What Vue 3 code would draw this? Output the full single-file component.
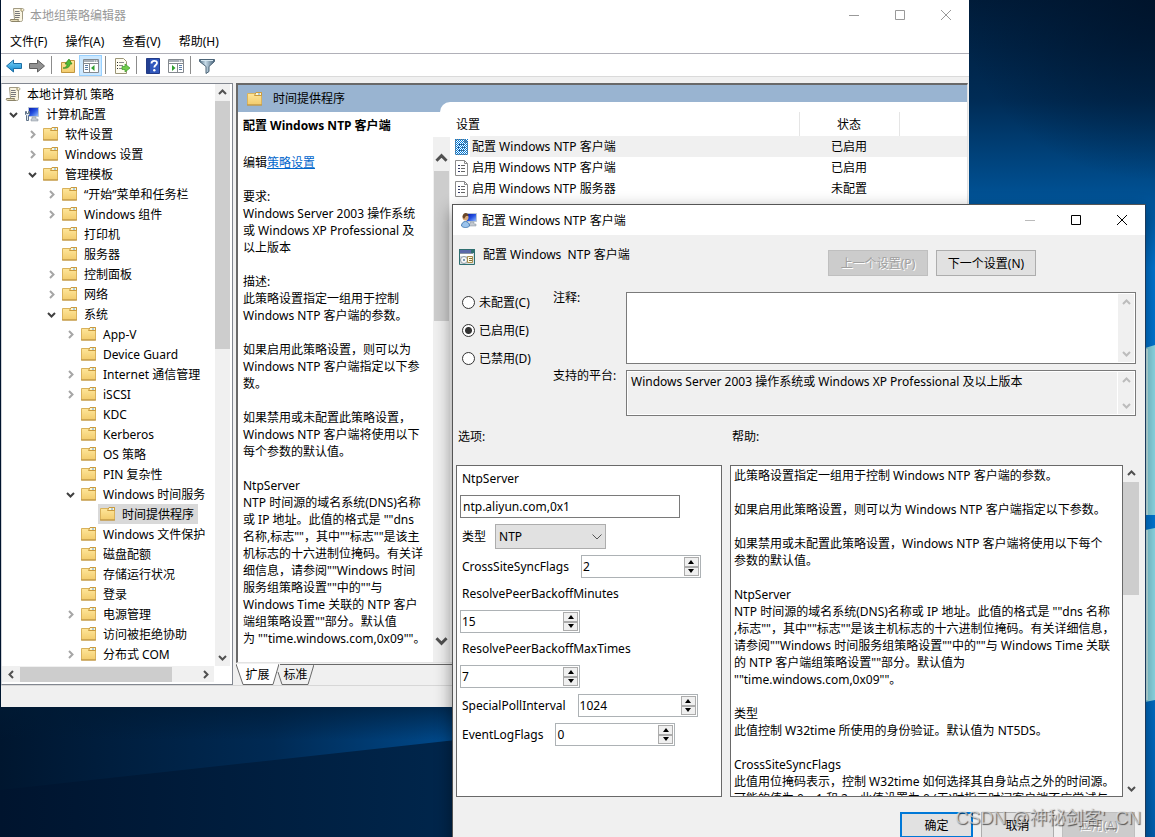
<script setup>
import { ref, reactive } from "vue";

const menus = ["文件(F)", "操作(A)", "查看(V)", "帮助(H)"];

// level - вложенность, open: true / false - есть стрелка, undefined - нет
const tree = [
  { level: 0, name: "本地计算机 策略", icon: "scroll" },
  { level: 1, name: "计算机配置", icon: "computer", open: true },
  { level: 2, name: "软件设置", open: false },
  { level: 2, name: "Windows 设置", open: false },
  { level: 2, name: "管理模板", open: true },
  { level: 3, name: "“开始”菜单和任务栏", open: false },
  { level: 3, name: "Windows 组件", open: false },
  { level: 3, name: "打印机" },
  { level: 3, name: "服务器" },
  { level: 3, name: "控制面板", open: false },
  { level: 3, name: "网络", open: false },
  { level: 3, name: "系统", open: true },
  { level: 4, name: "App-V", open: false },
  { level: 4, name: "Device Guard" },
  { level: 4, name: "Internet 通信管理", open: false },
  { level: 4, name: "iSCSI", open: false },
  { level: 4, name: "KDC" },
  { level: 4, name: "Kerberos" },
  { level: 4, name: "OS 策略" },
  { level: 4, name: "PIN 复杂性" },
  { level: 4, name: "Windows 时间服务", open: true },
  { level: 5, name: "时间提供程序" },
  { level: 4, name: "Windows 文件保护" },
  { level: 4, name: "磁盘配额" },
  { level: 4, name: "存储运行状况" },
  { level: 4, name: "登录" },
  { level: 4, name: "电源管理", open: false },
  { level: 4, name: "访问被拒绝协助" },
  { level: 4, name: "分布式 COM", open: false },
];
const selectedNode = ref("时间提供程序");
const indent = (level) => (level ? 2 + 19 * (level - 1) : 1) + "px";

const policies = [
  { name: "配置 Windows NTP 客户端", state: "已启用" },
  { name: "启用 Windows NTP 客户端", state: "已启用" },
  { name: "启用 Windows NTP 服务器", state: "未配置" },
];

const description = `要求:
Windows Server 2003 操作系统
或 Windows XP Professional 及
以上版本

描述:
此策略设置指定一组用于控制
Windows NTP 客户端的参数。

如果启用此策略设置，则可以为
Windows NTP 客户端指定以下参
数。

如果禁用或未配置此策略设置，
Windows NTP 客户端将使用以下
每个参数的默认值。

NtpServer
NTP 时间源的域名系统(DNS)名称
或 IP 地址。此值的格式是 ""dns
名称,标志""，其中""标志""是该主
机标志的十六进制位掩码。有关详
细信息，请参阅""Windows 时间
服务组策略设置""中的""与
Windows Time 关联的 NTP 客户
端组策略设置""部分。默认值
为 ""time.windows.com,0x09""。`;

const help = `此策略设置指定一组用于控制 Windows NTP 客户端的参数。

如果启用此策略设置，则可以为 Windows NTP 客户端指定以下参数。

如果禁用或未配置此策略设置，Windows NTP 客户端将使用以下每个
参数的默认值。

NtpServer
NTP 时间源的域名系统(DNS)名称或 IP 地址。此值的格式是 ""dns 名称
,标志""，其中""标志""是该主机标志的十六进制位掩码。有关详细信息，
请参阅""Windows 时间服务组策略设置""中的""与 Windows Time 关联
的 NTP 客户端组策略设置""部分。默认值为
""time.windows.com,0x09""。

类型
此值控制 W32time 所使用的身份验证。默认值为 NT5DS。

CrossSiteSyncFlags
此值用位掩码表示，控制 W32time 如何选择其自身站点之外的时间源。
可能的值为 0、1 和 2。此值设置为 0 (无)时指示时间客户端不应尝试与`;

const states = [
  { value: "none", label: "未配置(C)" },
  { value: "on", label: "已启用(E)" },
  { value: "off", label: "已禁用(D)" },
];
const state = ref("on");
const comment = ref("");
const platform = "Windows Server 2003 操作系统或 Windows XP Professional 及以上版本";
const ntpServer = ref("ntp.aliyun.com,0x1");
const type = ref("NTP");
const numbers = reactive([
  { name: "CrossSiteSyncFlags", value: 2 },
  { name: "ResolvePeerBackoffMinutes", value: 15, stacked: true },
  { name: "ResolvePeerBackoffMaxTimes", value: 7, stacked: true },
  { name: "SpecialPollInterval", value: 1024 },
  { name: "EventLogFlags", value: 0 },
]);
const step = (item, delta) => {
  item.value = Math.max(0, item.value + delta);
};
</script>

<template>
  <main class="desktop">
    <svg class="defs" width="0" height="0" aria-hidden="true">
      <linearGradient id="gold" x1="0" y1="0" x2="0" y2="1">
        <stop offset="0" stop-color="#ffe89e" />
        <stop offset="1" stop-color="#f2cb6c" />
      </linearGradient>
      <linearGradient id="screen" x1="0" y1="0" x2="1" y2="1">
        <stop offset="0" stop-color="#0414a8" />
        <stop offset=".5" stop-color="#2450e0" />
        <stop offset="1" stop-color="#9cc4ff" />
      </linearGradient>
      <linearGradient id="blue" x1="0" y1="0" x2="0" y2="1">
        <stop offset="0" stop-color="#7fd4f8" />
        <stop offset="1" stop-color="#0d87cf" />
      </linearGradient>
      <linearGradient id="steel" x1="0" y1="0" x2="1" y2="0">
        <stop offset="0" stop-color="#4d6a80" />
        <stop offset=".4" stop-color="#c7dbe8" />
        <stop offset="1" stop-color="#46627a" />
      </linearGradient>
      <symbol id="folder" viewBox="0 0 16 16">
        <path d="M.5 2.500h8l1-1h5v12.500H.5z" fill="url(#gold)" stroke="#d9b25c" />
        <path d="M9 2h5v2H8z" fill="#fff6d0" />
        <path d="M7.500 4.500h7M7.500 4.500l1.500-3h5.500v3" fill="none" stroke="#c99a3f" />
        <path d="M11 3h2" stroke="#5b9ee0" />
        <path d="M0 14h15" stroke="#b98f3e" />
      </symbol>
      <symbol id="scroll" viewBox="0 0 16 16">
        <path d="M4.500 1.500h9c2 0 1.500 3 0 3v8c0 2-1 2-2 2h-7l1-2z" fill="#faf5e2" stroke="#a19a82" />
        <path d="M1.500 12.500h8c-1 1 0 2 1 2h-8c-1 0-1.500-1-1-2z" fill="#e3d9b6" stroke="#8c8468" />
        <path d="M12.500 1.500c-1 1-1 2 0 3h1.500" fill="#d8c990" stroke="#a19a82" />
        <path d="M6 4.500h4.500M6 6.500h5M6 8.500h5M6 10.500h4.500" stroke="#77777a" />
      </symbol>
      <symbol id="computer" viewBox="0 0 16 16">
        <path d="M4.500 1.500h10v9h-10z" fill="url(#screen)" stroke="#b9c5d4" />
        <path d="M8 11h4v2h2v2H7v-2h1z" fill="#c3c9d0" stroke="#84909c" stroke-width=".5" />
        <path d="M1.500 5.500v3l1 1v5h2v-5l1-1v-3h-1v2h-2v-2z" fill="#e1e8ef" stroke="#5f7288" />
      </symbol>
      <symbol id="user-computer" viewBox="0 0 16 16">
        <path d="M5.500 1.500h10v8h-10z" fill="url(#screen)" stroke="#b9c5d4" />
        <path d="M9 10h4v2h2v2H8v-2h1z" fill="#c3c9d0" stroke="#84909c" stroke-width=".5" />
        <circle cx="4.500" cy="5.500" r="3" fill="#d9a878" />
        <path d="M1.500 5c0-5 6-5 6-1L5 4 3 7z" fill="#6b4728" />
        <path d="M.5 14c0-6 8-6 8 0-2 2-6 2-8 0z" fill="#9cc4ec" stroke="#4c7fb5" />
      </symbol>
      <symbol id="setting" viewBox="0 0 16 16">
        <path d="M.5.500h15v15H.5z" fill="#d5dde0" stroke="#2f6f70" />
        <path d="M1 1h11v3H1z" fill="#5a68a8" />
        <path d="M0 0h16v1H0zM12 1h4v3h-4z" fill="#2f6f70" />
        <path d="M1 5h13v2H1z" fill="#fff" />
        <path d="M1 4.500h13" stroke="#8c96a4" />
        <circle cx="5" cy="11" r="3.500" fill="#f6f6f6" stroke="#8f9ba4" />
        <circle cx="5" cy="11" r="1" fill="#517b9a" />
        <path d="M8.500 7.500h5v6h-5z" fill="#fffbe0" stroke="#a78d4b" />
        <path d="M10 9.500h3M10 11.500h3" stroke="#7e6b39" />
      </symbol>
      <symbol id="sheet" viewBox="0 0 14 16">
        <path d="M.5.500h9l3 3v12H.5z" fill="#fff" stroke="#8b8b8b" />
        <path d="M9.500.500v3h3" fill="none" stroke="#8b8b8b" />
        <path d="M3 5.500h2M3 8.500h2M3 11.500h2" stroke="#333a66" />
        <path d="M6 5.500h4M6 8.500h4M6 11.500h4" stroke="#666" />
      </symbol>
      <pattern id="dither" width="2" height="2" patternUnits="userSpaceOnUse">
        <path d="M0 0h1v1H0zM1 1h1v1H1z" fill="#0078d7" />
      </pattern>
      <symbol id="chevron" viewBox="0 0 9 9">
        <path d="M1 6l3.500-3.500L8 6" fill="none" stroke="currentColor" stroke-width="2" />
      </symbol>
      <symbol id="min" viewBox="0 0 10 10">
        <path d="M0 5.500h10" stroke="currentColor" />
      </symbol>
      <symbol id="max" viewBox="0 0 10 10">
        <path d="M.5.500h9v9h-9z" fill="none" stroke="currentColor" />
      </symbol>
      <symbol id="close" viewBox="0 0 10 10">
        <path d="M0 0l10 10M10 0L0 10" stroke="currentColor" />
      </symbol>
      <symbol id="pane" viewBox="0 0 16 16">
        <path d="M.5 1.500h15v13H.5z" fill="#fff" stroke="#84898f" />
        <path d="M1 2h14v2H1z" fill="#a9b0b8" />
        <path d="M11 3h1M13 3h1" stroke="#fff" />
        <path d="M1 5.500h14" stroke="#84898f" />
      </symbol>
    </svg>

    <svg class="wallpaper" viewBox="0 0 1155 837" preserveAspectRatio="none" aria-hidden="true">
      <defs>
        <linearGradient id="sky" x1="0" y1="0" x2="0" y2="1">
          <stop offset="0" stop-color="#001c3a" />
          <stop offset=".12" stop-color="#002c56" />
          <stop offset=".23" stop-color="#005092" />
          <stop offset=".32" stop-color="#0076d4" />
          <stop offset=".7" stop-color="#0078d7" />
          <stop offset="1" stop-color="#0062b4" />
        </linearGradient>
        <linearGradient id="ray" x1="0" y1="0" x2="1" y2="0">
          <stop offset="0" stop-color="#00162f" />
          <stop offset=".6" stop-color="#002a54" />
          <stop offset="1" stop-color="#004a8c" />
        </linearGradient>
        <linearGradient id="shade" x1="0" y1="0" x2="0" y2="1">
          <stop offset="0" stop-color="#001a34" stop-opacity=".8" />
          <stop offset="1" stop-color="#001a34" stop-opacity="0" />
        </linearGradient>
        <linearGradient id="ground" x1="0" y1="0" x2="1" y2="0">
          <stop offset="0" stop-color="#00142e" />
          <stop offset="1" stop-color="#00264c" />
        </linearGradient>
        <radialGradient id="corner" cx="1" cy="0" r="1">
          <stop offset="0" stop-color="#001228" stop-opacity=".8" />
          <stop offset="1" stop-color="#001228" stop-opacity="0" />
        </radialGradient>
      </defs>
      <path d="M0 0h1155v837H0z" fill="url(#sky)" />
      <path d="M960 0h195v180H960z" fill="url(#corner)" />
      <path d="M0 0h456v837H0z" fill="url(#ground)" />
      <path d="M0 680h456v60L0 790z" fill="url(#ray)" />
      <path d="M0 700h456v40H0z" fill="url(#shade)" />
      <path d="M1145 348l10-3v170h-10zM1145 530l10-2v172l-10 2z" fill="#8edbe8" />
      <path d="M1147 349v166M1147 530v170" stroke="#c9f2f4" stroke-width="2" />
    </svg>

    <section class="window editor">
      <header class="titlebar titlebar--inactive">
        <svg class="icon"><use href="#scroll" /></svg>
        <h1>本地组策略编辑器</h1>
        <button class="sys" aria-label="最小化"><svg><use href="#min" /></svg></button>
        <button class="sys" aria-label="最大化"><svg><use href="#max" /></svg></button>
        <button class="sys" aria-label="关闭"><svg><use href="#close" /></svg></button>
      </header>
      <nav class="menu">
        <button v-for="menu in menus" :key="menu">{{ menu }}</button>
      </nav>
      <div class="toolbar">
        <button aria-label="后退">
          <svg class="icon" viewBox="0 0 16 16">
            <path d="M.5 8l7-6v3.500h8v5h-8V14z" fill="url(#blue)" stroke="#1c6ea4" />
          </svg>
        </button>
        <button aria-label="前进">
          <svg class="icon" viewBox="0 0 16 16">
            <path d="M15.500 8l-7-6v3.500h-8v5h8V14z" fill="#929292" stroke="#5f5f5f" />
          </svg>
        </button>
        <i class="sep"></i>
        <button aria-label="上一级">
          <svg class="icon" viewBox="0 0 16 16">
            <path d="M1.500 4.500h7l1-2h5v12h-13z" fill="url(#gold)" stroke="#c0953f" />
            <path d="M3 10c3 0 4-2 4-4H5l4-5 3 5h-2c0 3-3 5-7 4z" fill="#4fbb35" stroke="#2c8420" stroke-width=".7" />
          </svg>
        </button>
        <button class="pressed" aria-label="显示/隐藏控制台树">
          <svg class="icon" viewBox="0 0 16 16">
            <use href="#pane" />
            <path d="M6.500 6v8" stroke="#84898f" />
            <path d="M2 7.500h3M2 9.500h3M2 11.500h3" stroke="#5a7da8" />
            <path d="M11.500 7v6L8 10z" fill="#2fa02f" />
          </svg>
        </button>
        <i class="sep"></i>
        <button aria-label="导出列表">
          <svg class="icon" viewBox="0 0 16 16">
            <path d="M1.500.500h8l3 3v12h-11z" fill="#fffdf0" stroke="#9b9577" />
            <path d="M3 4.500h1M3 7.500h1M3 10.500h1" stroke="#222" />
            <path d="M5 4.500h5M5 7.500h4M5 10.500h3" stroke="#8b8b8b" />
            <path d="M8 8.500h3V6l5 4-5 4v-2.500H8z" fill="#72cc4b" stroke="#3b9b2a" stroke-width=".7" />
          </svg>
        </button>
        <i class="sep"></i>
        <button aria-label="帮助">
          <svg class="icon" viewBox="0 0 16 16">
            <path d="M1.500.500h13v15h-13z" fill="#3158bd" stroke="#233b86" />
            <path d="M2 1h3v14H2z" fill="#223f92" />
            <path d="M6.500 5.500c0-3.500 5.500-3.500 5.500-.500 0 2-2.700 2-2.700 4.500" fill="none" stroke="#fff" stroke-width="1.800" />
            <circle cx="9.300" cy="12.300" r="1.200" fill="#fff" />
          </svg>
        </button>
        <button aria-label="显示/隐藏操作窗格">
          <svg class="icon" viewBox="0 0 16 16">
            <use href="#pane" />
            <path d="M9.500 6v8" stroke="#84898f" />
            <path d="M11 7.500h3M11 9.500h3M11 11.500h3" stroke="#5a7da8" />
            <path d="M4 7v6l3.500-3z" fill="#2fa02f" />
          </svg>
        </button>
        <i class="sep"></i>
        <button aria-label="筛选器">
          <svg class="icon" viewBox="0 0 16 16">
            <path d="M.5 1.500h15v2l-5.500 5v5l-3 2v-7l-6.500-5z" fill="url(#steel)" stroke="#4c6477" />
            <path d="M2 2.500h12" stroke="#d9e9f2" />
          </svg>
        </button>
      </div>

      <div class="workspace">
        <aside class="tree">
          <div class="tree__view">
            <ul>
              <li v-for="node in tree" :key="node.name" :style="{ paddingLeft: indent(node.level) }">
                <span v-if="node.level" class="arrow" :class="{ 'arrow--open': node.open }">
                  <svg v-if="node.open !== undefined"><use href="#chevron" /></svg>
                </span>
                <button class="node" :class="{ 'node--selected': node.name === selectedNode }"
                  @click="selectedNode = node.name">
                  <svg class="icon"><use :href="'#' + (node.icon || 'folder')" /></svg>
                  {{ node.name }}
                </button>
              </li>
            </ul>
            <div class="scroll">
              <svg class="up"><use href="#chevron" /></svg>
              <i class="thumb thumb--tree"></i>
              <svg class="down"><use href="#chevron" /></svg>
            </div>
          </div>
          <div class="scroll scroll--x">
            <svg class="left"><use href="#chevron" /></svg>
            <i class="thumb"></i>
            <svg class="right"><use href="#chevron" /></svg>
          </div>
        </aside>

        <div class="result">
          <div class="result__frame">
            <header class="result__head">
              <svg class="icon"><use href="#folder" /></svg>
              <h2>时间提供程序</h2>
              <i class="curve"></i>
            </header>
            <div class="result__body">
              <article class="extended">
                <h3>配置 Windows NTP 客户端</h3>
                <div class="extended__view">
                  <div class="extended__text">
                    <p>编辑<a href="#">策略设置</a></p>
                    <p class="lines">{{ description }}</p>
                  </div>
                  <div class="scroll scroll--wide">
                    <svg class="up"><use href="#chevron" /></svg>
                    <i class="thumb thumb--text"></i>
                    <svg class="down"><use href="#chevron" /></svg>
                  </div>
                </div>
              </article>
              <table class="policies">
                <thead>
                  <tr>
                    <th class="col-name">设置</th>
                    <th class="col-state">状态</th>
                    <th></th>
                  </tr>
                </thead>
                <tbody>
                  <tr v-for="(policy, i) in policies" :key="policy.name" :class="{ current: i === 0 }">
                    <td>
                      <div class="policy">
                        <svg viewBox="0 0 14 16">
                          <use href="#sheet" />
                          <path v-if="i === 0" d="M0 0h13v16H0z" fill="url(#dither)" />
                        </svg>
                        <span>{{ policy.name }}</span>
                      </div>
                    </td>
                    <td class="state">{{ policy.state }}</td>
                    <td></td>
                  </tr>
                </tbody>
              </table>
            </div>
          </div>
          <div class="tabs">
            <button class="tab tab--active">
              <svg viewBox="0 0 43 21"><path d="M0 0l7 20.500h30L43 0" fill="#fff" stroke="#696969" /></svg>
              <span>扩展</span>
            </button>
            <button class="tab">
              <svg viewBox="0 0 37 21"><path d="M1 8l4 12.500h26L37 .500H3" fill="#f0f0f0" stroke="#696969" /></svg>
              <span>标准</span>
            </button>
            <i class="tabs__rest"></i>
          </div>
        </div>
      </div>
      <footer class="status"></footer>
    </section>

    <section class="window dialog">
      <header class="titlebar">
        <svg class="icon"><use href="#user-computer" /></svg>
        <h1>配置 Windows NTP 客户端</h1>
        <button class="sys" disabled aria-label="最小化"><svg><use href="#min" /></svg></button>
        <button class="sys" aria-label="最大化"><svg><use href="#max" /></svg></button>
        <button class="sys" aria-label="关闭"><svg><use href="#close" /></svg></button>
      </header>
      <div class="caption">
        <svg class="icon"><use href="#setting" /></svg>
        <h2>配置 Windows &nbsp;NTP 客户端</h2>
        <div class="caption__buttons">
          <button class="btn" disabled>上一个设置(P)</button>
          <button class="btn">下一个设置(N)</button>
        </div>
      </div>

      <div class="general">
        <div class="radios">
          <label v-for="item in states" :key="item.value">
            <input type="radio" name="state" :value="item.value" v-model="state">
            {{ item.label }}
          </label>
        </div>
        <div class="fields">
          <label for="comment">注释:</label>
          <div class="memo">
            <textarea id="comment" v-model="comment"></textarea>
            <div class="scroll scroll--off">
              <svg class="up"><use href="#chevron" /></svg>
              <svg class="down"><use href="#chevron" /></svg>
            </div>
          </div>
          <label for="platform">支持的平台:</label>
          <div class="memo memo--readonly">
            <textarea id="platform" readonly :value="platform"></textarea>
            <div class="scroll scroll--off">
              <svg class="up"><use href="#chevron" /></svg>
              <svg class="down"><use href="#chevron" /></svg>
            </div>
          </div>
        </div>
      </div>

      <div class="panels">
        <h3>选项:</h3>
        <h3>帮助:</h3>
        <form class="options" @submit.prevent>
          <label for="server">NtpServer</label>
          <input id="server" class="text" type="text" v-model="ntpServer">
          <div class="option option--select">
            <label for="type">类型</label>
            <div class="select">
              <select id="type" v-model="type">
                <option>NTP</option>
                <option>NT5DS</option>
              </select>
              <svg viewBox="0 0 10 6"><path d="M.5.500L5 5 9.500.500" fill="none" stroke="#555" /></svg>
            </div>
          </div>
          <div class="option" :class="{ 'option--stacked': item.stacked }" v-for="item in numbers" :key="item.name">
            <label :for="item.name">{{ item.name }}</label>
            <div class="spin">
              <input :id="item.name" type="number" v-model="item.value">
              <div class="spin__buttons">
                <button type="button" aria-label="增加" @click="step(item, 1)">
                  <svg viewBox="0 0 6 4"><path d="M0 4l3-4 3 4z" /></svg>
                </button>
                <button type="button" aria-label="减少" @click="step(item, -1)">
                  <svg viewBox="0 0 6 4"><path d="M0 0l3 4 3-4z" /></svg>
                </button>
              </div>
            </div>
          </div>
        </form>
        <div class="help">
          <p class="lines help__text">{{ help }}</p>
          <div class="scroll scroll--bare">
            <svg class="up"><use href="#chevron" /></svg>
            <i class="thumb thumb--help"></i>
            <svg class="down"><use href="#chevron" /></svg>
          </div>
        </div>
      </div>

      <footer class="actions">
        <button class="btn btn--default">确定</button>
        <button class="btn">取消</button>
        <button class="btn" disabled>应用(A)</button>
      </footer>
    </section>

    <div class="watermark">CSDN @神秘剑客'_CN</div>
  </main>
</template>

<style>
body {
  margin: 0;
}
</style>

<style scoped>
.desktop {
  position: relative;
  height: 100vh;
  min-height: 700px;
  overflow: hidden;
  background: #00142e;
  color: #000;
  font: 12px/17px "Noto Sans", "Noto Sans CJK SC", sans-serif;
}

.desktop * {
  box-sizing: border-box;
}

.defs {
  position: absolute;
}

.wallpaper {
  position: absolute;
  inset: 0;
  width: 100%;
  height: 100%;
}

h1,
h2,
h3,
p,
ul {
  margin: 0;
  padding: 0;
  font-size: 12px;
  font-weight: normal;
  list-style: none;
}

button,
input,
select,
textarea {
  font: inherit;
  color: inherit;
  margin: 0;
  padding: 0;
  border: none;
  border-radius: 0;
  background: none;
  outline: none;
}

.icon {
  width: 16px;
  height: 16px;
  flex: none;
}

.lines {
  white-space: pre;
}

/* окна */
.window {
  position: absolute;
  display: flex;
  flex-direction: column;
  background: #f0f0f0;
}

.editor {
  inset: 0 186px 130px 1px;
}

.dialog {
  inset: 204px 9px -12px 452px;
  border: 1px solid #555;
  border-right-color: #1b3a5c;
  box-shadow: 0 6px 16px rgba(0, 0, 0, .45);
}

.titlebar {
  display: flex;
  align-items: center;
  flex: none;
  height: 30px;
  padding-left: 8px;
  background: #fff;
}

.titlebar h1 {
  flex: 1;
  padding-left: 5px;
}

.titlebar--inactive {
  color: #999;
}

.sys {
  width: 46px;
  height: 30px;
  display: flex;
  align-items: center;
  justify-content: center;
}

.sys svg {
  width: 10px;
  height: 10px;
}

.sys:disabled {
  color: #bbb;
}

.menu {
  display: flex;
  flex: none;
  height: 24px;
  background: #fff;
  border-bottom: 1px solid #b0b0b8;
}

.menu button {
  padding: 0 9px;
}

.toolbar {
  display: flex;
  flex: none;
  height: 23px;
  padding: 1px 0 0 1px;
  background: #fff;
  border-bottom: 1px solid #dadada;
}

.toolbar button {
  width: 23px;
  height: 21px;
  display: flex;
  align-items: center;
  justify-content: center;
}

.toolbar .pressed {
  background: #cce8ff;
  border: 1px solid #99d1ff;
}

.sep {
  width: 1px;
  height: 18px;
  margin: 1px 4px 0 3px;
  background: #8c8c8c;
}

.workspace {
  flex: 1;
  min-height: 0;
  display: flex;
  gap: 3px;
  padding: 6px 1px 0 0;
}

.status {
  flex: none;
  height: 22px;
  border-top: 1px solid #d7d7d7;
}

/* полосы прокрутки */
.scroll {
  display: flex;
  flex-direction: column;
  flex: none;
  width: 15px;
  background: #f0f0f0;
  color: #505050;
}

.scroll svg {
  flex: none;
  width: 9px;
  height: 9px;
  margin: 4px auto;
}

.scroll .down {
  margin-top: auto;
  transform: rotate(180deg);
}

.scroll--x {
  flex-direction: row;
  align-items: center;
  width: auto;
  height: 16px;
  margin-right: 16px;
}

.scroll--x svg {
  margin: 0 4px 0 5px;
}

.scroll--x .left {
  transform: rotate(-90deg);
}

.scroll--x .right {
  margin-left: auto;
  transform: rotate(90deg);
}

.scroll--x .thumb {
  width: 152px;
  height: 15px;
}

.scroll--wide {
  width: 17px;
  padding: 9px 1px;
}

.scroll--wide svg {
  width: 13px;
  height: 13px;
  margin: 6px auto;
}

.scroll--off {
  color: #bcbcbc;
}

.scroll--bare {
  width: 16px;
}

.thumb {
  flex: none;
  background: #cdcdcd;
}

.thumb--tree {
  height: 248px;
}

.thumb--text {
  height: 150px;
}

.thumb--help {
  height: 113px;
}

/* дерево */
.tree {
  display: flex;
  flex-direction: column;
  flex: none;
  width: 232px;
  padding: 0 2px 2px 0;
  background: #fff;
  border: 1px solid #828790;
  border-left-color: #d0d3d8;
}

.tree__view {
  flex: 1;
  min-height: 0;
  display: flex;
}

.tree ul {
  flex: 1;
  min-width: 0;
  overflow: hidden;
}

.tree li {
  display: flex;
  height: 20px;
  white-space: nowrap;
}

.arrow {
  width: 18px;
  height: 20px;
  display: flex;
  align-items: center;
  justify-content: center;
  flex: none;
  color: #a6a6a6;
}

.arrow svg {
  width: 9px;
  height: 9px;
  transform: rotate(90deg);
}

.arrow--open {
  color: #404040;
}

.arrow--open svg {
  transform: rotate(180deg);
}

.node {
  display: flex;
  align-items: center;
  gap: 6px;
  padding: 0 4px 0 2px;
  white-space: nowrap;
}

.node--selected {
  background: #d9d9d9;
}

/* правая часть */
.result {
  flex: 1;
  min-width: 0;
  display: flex;
  flex-direction: column;
}

.result__frame {
  flex: 1;
  min-height: 0;
  display: flex;
  flex-direction: column;
  background: #fff;
  border: 2px solid #696969;
  border-right: 1px solid #e3e3e3;
  border-bottom: 1px solid #e3e3e3;
}

.result__head {
  display: flex;
  align-items: center;
  flex: none;
  height: 27px;
  padding-left: 9px;
  background: #99b4d1;
}

.result__head h2 {
  width: 193px;
  padding-left: 10px;
}

.curve {
  flex: 1;
  align-self: flex-end;
  height: 10px;
  margin-left: -16px;
  background: #fff;
  border-top-left-radius: 10px;
}

.result__body {
  flex: 1;
  min-height: 0;
  display: flex;
  align-items: stretch;
}

.extended {
  flex: none;
  width: 212px;
  display: flex;
  flex-direction: column;
}

.extended h3 {
  height: 25px;
  padding: 5px 0 0 5px;
  font-weight: bold;
}

.extended__view {
  flex: 1;
  min-height: 0;
  display: flex;
}

.extended__text {
  flex: 1;
  min-width: 0;
  overflow: hidden;
  padding: 17px 0 0 5px;
}

.extended__text p + p {
  margin-top: 17px;
}

.extended a {
  color: #0066cc;
}

.policies {
  flex: 1;
  align-self: flex-start;
  min-width: 0;
  table-layout: fixed;
  border-collapse: collapse;
}

.policies th {
  height: 24px;
  padding: 0;
  font-weight: normal;
  border-right: 1px solid #e5e5e5;
}

.policies th:last-child {
  border-right: none;
}

.policies .col-name {
  width: 349px;
  padding-left: 6px;
  text-align: left;
}

.policies .col-state {
  width: 100px;
}

.policies td {
  height: 21px;
  padding: 0;
}

.policy {
  display: flex;
  align-items: center;
  height: 21px;
  padding-left: 5px;
}

.policy svg {
  width: 14px;
  height: 16px;
  flex: none;
}

.policy span {
  flex: 1;
  margin-left: 1px;
  padding-left: 2px;
  line-height: 21px;
}

.current .policy span,
.current td + td {
  background: #f0f0f0;
}

.state {
  text-align: center;
}

.tabs {
  display: flex;
  flex: none;
  height: 22px;
  padding-top: 1px;
}

.tab {
  position: relative;
  height: 21px;
  width: 37px;
  margin-left: -2px;
}

.tab--active {
  width: 43px;
  margin-left: 0;
}

.tab svg {
  position: absolute;
  inset: 0;
  width: 100%;
  height: 21px;
}

.tab span {
  position: relative;
}

.tabs__rest {
  flex: 1;
  border-top: 1px solid #696969;
}

/* диалог */
.btn {
  height: 26px;
  background: #e1e1e1;
  border: 1px solid #adadad;
}

.btn:disabled {
  background: #ccc;
  border-color: #bfbfbf;
  color: #a0a0a0;
  text-shadow: 1px 1px #fff;
}

.btn--default {
  border: 2px solid #0078d7;
}

.caption {
  display: flex;
  align-items: flex-start;
  flex: none;
  height: 53px;
  padding: 14px 109px 0 6px;
}

.caption h2 {
  flex: 1;
  padding-left: 8px;
  line-height: 12px;
}

.caption__buttons {
  display: flex;
  gap: 8px;
  padding-top: 1px;
}

.caption .btn {
  width: 100px;
}

.general {
  display: flex;
  flex: none;
  padding: 0 9px;
}

.radios {
  width: 91px;
}

.radios label {
  display: flex;
  align-items: center;
  gap: 4px;
  height: 28px;
}

.radios input {
  appearance: none;
  width: 13px;
  height: 13px;
  border: 1px solid #333;
  border-radius: 50%;
  background: #fff;
}

.radios input:checked {
  background: radial-gradient(#333 3px, #fff 4px);
}

.fields {
  flex: 1;
  display: grid;
  grid-template-columns: 73px 1fr;
  row-gap: 6px;
  padding-top: 4px;
}

.fields label {
  line-height: 12px;
}

.memo {
  display: flex;
  height: 72px;
  padding: 1px;
  background: #fff;
  border: 1px solid #7a7a7a;
}

.memo--readonly {
  height: 46px;
}

.memo textarea {
  flex: 1;
  padding: 1px 3px;
  resize: none;
  overflow: hidden;
}

.memo--readonly textarea {
  background: #f0f0f0;
  margin-right: 1px;
}

.memo .scroll {
  width: 16px;
}

.panels {
  flex: 1;
  min-height: 0;
  display: grid;
  grid-template-columns: 266px 1fr;
  grid-template-rows: 49px 1fr;
  column-gap: 8px;
  padding: 0 6px 0 3px;
}

.panels h3 {
  padding: 12px 0 0 2px;
}

.options {
  display: flex;
  flex-direction: column;
  align-items: flex-start;
  gap: 6px;
  padding: 3px;
  background: #fff;
  border: 1px solid #696969;
}

.options label {
  padding-left: 2px;
  line-height: 20px;
}

.text {
  width: 220px;
  height: 23px;
  padding: 0 2px;
  border: 1px solid #7a7a7a;
}

.option {
  display: flex;
  align-items: center;
  gap: 12px;
}

.option--select {
  gap: 9px;
}

.option--stacked {
  flex-direction: column;
  align-items: flex-start;
  gap: 6px;
}

.select {
  position: relative;
  width: 111px;
  height: 25px;
}

.select select {
  appearance: none;
  width: 100%;
  height: 100%;
  padding-left: 3px;
  background: #e1e1e1;
  border: 1px solid #adadad;
}

.select svg {
  position: absolute;
  right: 4px;
  top: 10px;
  width: 10px;
  height: 6px;
  pointer-events: none;
}

.spin {
  display: flex;
  width: 120px;
  height: 23px;
  padding: 1px;
  background: #fff;
  border: 1px solid #adb2b5;
}

.spin input {
  flex: 1;
  min-width: 0;
  appearance: textfield;
}

.spin input::-webkit-inner-spin-button {
  appearance: none;
}

.spin__buttons {
  display: flex;
  flex-direction: column;
  width: 15px;
}

.spin__buttons button {
  flex: 1;
  min-height: 0;
  display: flex;
  align-items: center;
  justify-content: center;
  background: #f0f0f0;
  border: 1px solid #acacac;
}

.spin__buttons svg {
  width: 6px;
  height: 4px;
}

.help {
  display: flex;
  min-width: 0;
  min-height: 0;
}

.help__text {
  flex: 1;
  min-width: 0;
  overflow: hidden;
  padding: 1px 3px;
  background: #fff;
  border: 1px solid #696969;
}

.actions {
  display: flex;
  justify-content: flex-end;
  gap: 8px;
  flex: none;
  height: 51px;
  padding: 15px 10px 0 0;
}

.actions .btn {
  width: 73px;
}

.watermark {
  position: absolute;
  right: 14px;
  bottom: 6px;
  font: 18px/26px "Liberation Sans", "Noto Sans CJK SC", sans-serif;
  color: rgba(225, 225, 225, .7);
  text-shadow: 1px 1px 1px rgba(0, 0, 0, .6);
  pointer-events: none;
}
</style>
